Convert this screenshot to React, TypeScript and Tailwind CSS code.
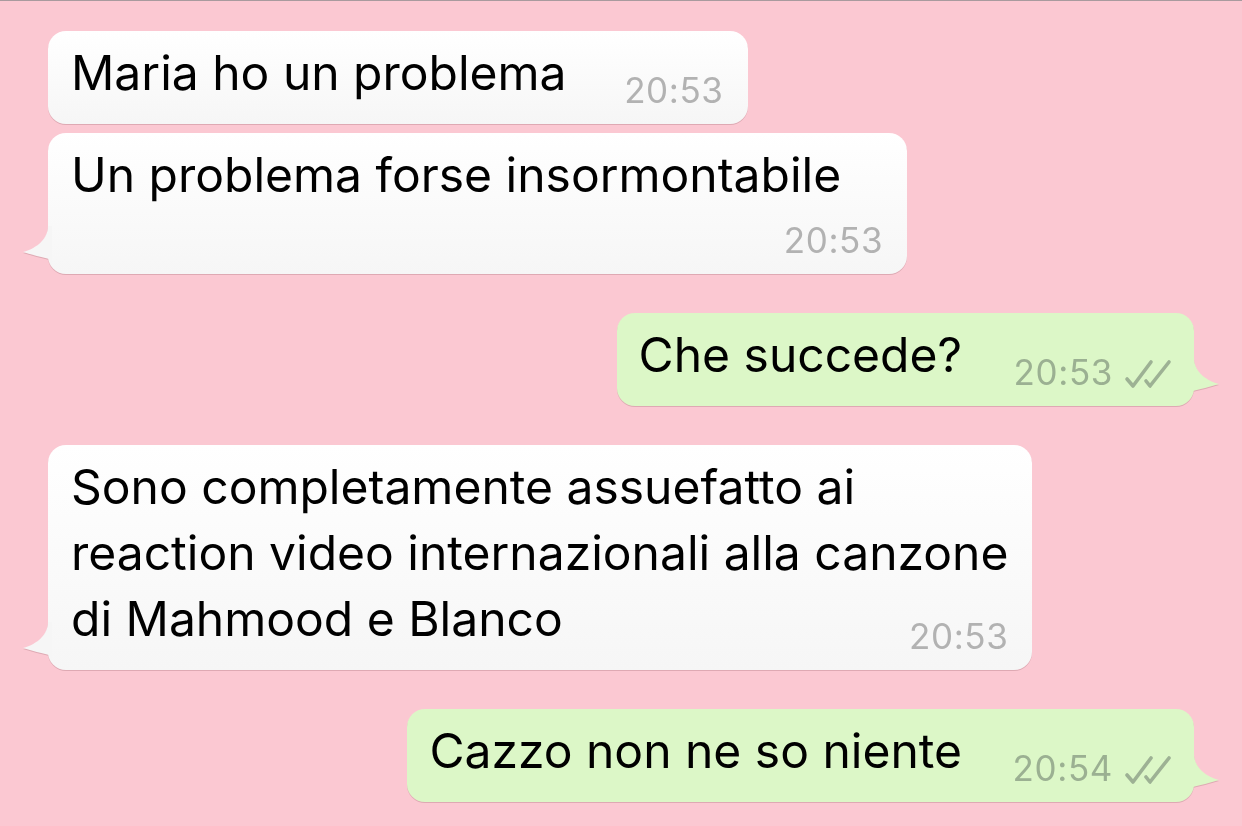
type Side = 'in' | 'out';

interface Message {
  id: number;
  side: Side;
  lines: string[];
  time: string;
  tail: boolean;
  timeBelow?: boolean;
}

const messages: Message[] = [
  { id: 1, side: 'in', lines: ['Maria ho un problema'], time: '20:53', tail: false },
  { id: 2, side: 'in', lines: ['Un problema forse insormontabile'], time: '20:53', tail: true, timeBelow: true },
  { id: 3, side: 'out', lines: ['Che succede?'], time: '20:53', tail: true },
  {
    id: 4,
    side: 'in',
    lines: [
      'Sono completamente assuefatto ai',
      'reaction video internazionali alla canzone',
      'di Mahmood e Blanco',
    ],
    time: '20:53',
    tail: true,
  },
  { id: 5, side: 'out', lines: ['Cazzo non ne so niente'], time: '20:54', tail: true },
];

function Tail({ side }: { side: Side }) {
  const fill = side === 'in' ? '#f6f6f6' : '#dcf7c7';
  return (
    <svg
      width="32"
      height="48"
      viewBox="0 0 32 48"
      className={
        side === 'in'
          ? 'absolute bottom-0 left-[-28px]'
          : 'absolute bottom-0 right-[-28px] -scale-x-100'
      }
    >
      <path
        d="M32 0 L28 0 C28 12, 18 22, 3 26 C12 29, 22 31, 29 33 L32 38 Z"
        fill={fill}
      />
    </svg>
  );
}

function Ticks() {
  return (
    <svg width="48" height="30" viewBox="0 0 48 30" className="ml-[11px] mb-[1px]">
      <g fill="none" stroke="#9db194" strokeWidth="3.6" strokeLinecap="round" strokeLinejoin="round">
        <path d="M3 20 L9 27 L27 3" />
        <path d="M22 22 L26 27 L45 3" />
      </g>
    </svg>
  );
}

function Bubble({ msg }: { msg: Message }) {
  const isIn = msg.side === 'in';
  const spacer = isIn ? 'w-[157px]' : 'w-[210px]';
  return (
    <div className="relative drop-shadow-[0_1.5px_0.5px_rgba(120,60,70,0.22)]">
      <div
        className={
          (isIn
            ? 'bg-linear-to-b from-[#ffffff] to-[#f6f6f6] pl-[23px]'
            : 'bg-[#dcf7c7] pl-[22px]') +
          ' relative rounded-[18px] pt-[9px] pb-[18px] ' +
          (msg.timeBelow ? 'pr-[66px]' : isIn ? 'pr-[24px]' : 'pr-[22px]')
        }
      >
        <div className="text-[48px] leading-[66px] text-black">
          {msg.lines.map((line, i) => (
            <span key={i} className="block whitespace-nowrap">
              {line}
              {i === msg.lines.length - 1 && !msg.timeBelow && (
                <span className={'inline-block h-px ' + spacer} />
              )}
            </span>
          ))}
          {msg.timeBelow && <div className="h-[48px]" />}
        </div>
        <div
          className={
            'absolute bottom-[16px] flex items-end text-[35px] leading-[35px] tracking-[0.6px] ' +
            (isIn ? 'right-[24px] text-[#b2b2b2]' : 'right-[22px] text-[#9bb092]')
          }
        >
          <span>{msg.time}</span>
          {!isIn && <Ticks />}
        </div>
      </div>
      {msg.tail && <Tail side={msg.side} />}
    </div>
  );
}

export default function App() {
  return (
    <div className="h-[826px] overflow-hidden border-t border-[#a89a9e] bg-[#fbc8d2] px-[48px] pt-[30px] font-['Inter','Liberation_Sans',sans-serif]">
      <div className="flex flex-col">
        {messages.map((msg, i) => {
          const prev = messages[i - 1];
          const gap = !prev ? '' : prev.side === msg.side ? 'mt-[9px]' : 'mt-[39px]';
          return (
            <div
              key={msg.id}
              className={'flex ' + (msg.side === 'in' ? 'justify-start' : 'justify-end') + ' ' + gap}
            >
              <Bubble msg={msg} />
            </div>
          );
        })}
      </div>
    </div>
  );
}
